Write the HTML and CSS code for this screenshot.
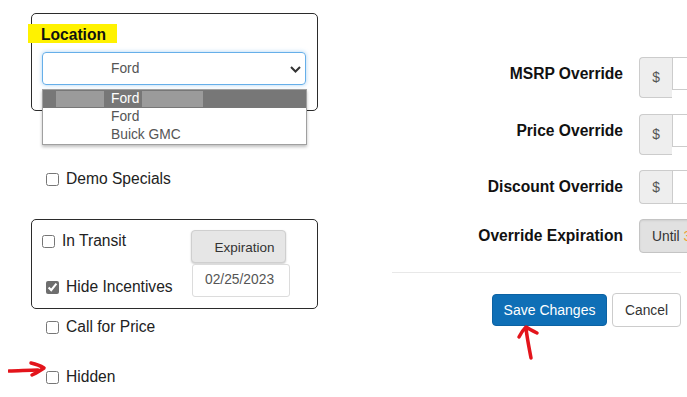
FILE: index.html
```html
<!DOCTYPE html>
<html>
<head>
    <title>Vehicle Options</title>
    <link rel="stylesheet" href="styles.css">
</head>
<body>

<div class="page">
    <div class="left">
        <div class="panel location-panel">
            <span class="highlight">Location</span>
            <div class="select-wrap">
                <div class="fake-select">
                    <span>Ford</span>
                    <svg class="chevron" width="11" height="7" viewBox="0 0 11 7"><path d="M1 1 L5.5 5.5 L10 1" fill="none" stroke="#333" stroke-width="2"/></svg>
                </div>
                <ul class="dropdown">
                    <li class="active"><i class="redact r1"></i>Ford<i class="redact r2"></i></li>
                    <li>Ford</li>
                    <li>Buick GMC</li>
                </ul>
            </div>
        </div>

        <label class="check demo"><input type="checkbox"> Demo Specials</label>

        <div class="panel transit-panel">
            <div class="transit-left">
                <label class="check flush"><input type="checkbox"> In Transit</label>
                <label class="check hide-inc"><input type="checkbox" checked> Hide Incentives</label>
            </div>
            <div class="transit-right">
                <button class="btn-exp">Expiration</button>
                <input class="date" type="text" value="02/25/2023">
            </div>
        </div>

        <label class="check call"><input type="checkbox"> Call for Price</label>
        <label class="check hidden-row"><input type="checkbox"> Hidden</label>

        <svg class="arrow arrow-left" width="40" height="20" viewBox="0 0 40 20">
            <path d="M1 11 C10 11, 20 10, 30 10" fill="none" stroke="#e3141b" stroke-width="3.5" stroke-linecap="round"/>
            <path d="M23 3 C28 4, 33 6, 36 8 C32 11, 28 13, 24 15" fill="none" stroke="#e3141b" stroke-width="3.5" stroke-linecap="round" stroke-linejoin="round"/>
        </svg>
    </div>

    <div class="right">
        <div class="row tall">
            <div class="label">MSRP Override</div>
            <div class="group"><span class="addon">$</span><input class="money" type="text"></div>
        </div>
        <div class="row tall">
            <div class="label">Price Override</div>
            <div class="group"><span class="addon">$</span><input class="money" type="text"></div>
        </div>
        <div class="row">
            <div class="label">Discount Override</div>
            <div class="group"><span class="addon">$</span><input class="money" type="text"></div>
        </div>
        <div class="row">
            <div class="label">Override Expiration</div>
            <button class="btn-until">Until <span class="orange">3/</span></button>
        </div>

        <div class="footer">
            <button class="btn-save">Save Changes</button>
            <button class="btn-cancel">Cancel</button>
        </div>

        <svg class="arrow arrow-up" width="30" height="40" viewBox="0 0 30 40">
            <path d="M10 5 C11 15, 13 24, 15 35" fill="none" stroke="#e3141b" stroke-width="3.5" stroke-linecap="round"/>
            <path d="M3 14 C5 10, 7 7, 10 4 C13 6, 17 8, 21 10" fill="none" stroke="#e3141b" stroke-width="3.5" stroke-linecap="round" stroke-linejoin="round"/>
        </svg>
    </div>
</div>

</body>
</html>
```

FILE: styles.css
```css
html, body {
    overflow: hidden;
}
body {
    margin: 0;
    background: #fff;
    font-family: "Liberation Sans", Arial, sans-serif;
    color: #222;
}
.page {
    display: flex;
    width: 800px;
}

/* left column */
.left {
    position: relative;
    width: 287px;
    padding: 13px 0 0 31px;
    display: flex;
    flex-direction: column;
}
.panel {
    border: 1px solid #2b2b2b;
    border-radius: 5px;
}
.location-panel {
    padding: 10px 10px 25px 10px;
}
.highlight {
    display: inline-block;
    margin-left: -14px;
    padding: 2px 11px 0 13px;
    height: 17px;
    line-height: 17px;
    background: #fff200;
    font-weight: bold;
    font-size: 15.6px;
    color: #111;
}
.select-wrap {
    position: relative;
    margin-top: 8px;
}
.fake-select {
    height: 31px;
    width: 194px;
    box-sizing: content-box;
    border: 1px solid #66afe9;
    border-radius: 4px;
    box-shadow: 0 0 4px rgba(102, 175, 233, 0.55);
    display: flex;
    align-items: center;
    padding-left: 68px;
    position: relative;
    font-size: 13.8px;
    color: #555;
}
.chevron {
    position: absolute;
    right: 4px;
    top: 13px;
}
.dropdown {
    position: absolute;
    top: 37px;
    left: 0;
    width: 263px;
    margin: 0;
    padding: 0;
    list-style: none;
    background: #fff;
    border: 1px solid #a0a0a0;
    box-shadow: 0 2px 3px rgba(0, 0, 0, 0.25);
    font-size: 13.8px;
    color: #555;
}
.dropdown li {
    position: relative;
    height: 18px;
    line-height: 18px;
    padding-left: 68px;
}
.dropdown li.active {
    background: #777;
    color: #fff;
}
.redact {
    position: absolute;
    top: 1px;
    height: 16px;
    background: #9b9b9b;
}
.r1 { left: 13px; width: 48px; }
.r2 { left: 99px; width: 61px; }

.check {
    display: flex;
    align-items: center;
    gap: 7px;
    height: 20px;
    font-size: 15.6px;
    color: #222;
    padding-left: 15px;
}
.check input {
    margin: 0;
    width: 13px;
    height: 13px;
    accent-color: #6e6e6e;
}
.demo {
    margin-top: 58px;
}
.transit-panel {
    margin-top: 30px;
    display: flex;
    padding: 10px;
}
.transit-left {
    width: 149px;
}
.transit-left .check {
    height: 22px;
}
.check.flush {
    padding-left: 0;
}
.check.hide-inc {
    padding-left: 4px;
    margin-top: 24px;
}
.transit-right {
    display: flex;
    flex-direction: column;
}
.btn-exp {
    width: 95px;
    height: 33px;
    padding: 2px 0 0 12px;
    background: #e6e6e6;
    border: 1px solid #cfcfcf;
    border-radius: 4px;
    box-shadow: 0 1px 2px rgba(0, 0, 0, 0.2);
    font-family: inherit;
    font-size: 13.5px;
    color: #333;
}
.date {
    margin: 1px 0 0 1px;
    width: 98px;
    height: 33px;
    box-sizing: border-box;
    border: 1px solid #dcdcdc;
    border-radius: 3px;
    padding: 0 0 2px 12px;
    font-family: inherit;
    font-size: 13.8px;
    color: #555;
}
.call {
    margin-top: 8px;
}
.hidden-row {
    margin-top: 30px;
}
.arrow {
    position: absolute;
}
.arrow-left {
    left: 8px;
    top: 360px;
}

/* right column */
.right {
    position: relative;
    margin-left: 74px;
    width: 408px;
    padding-top: 57px;
}
.row {
    display: flex;
    align-items: flex-start;
    gap: 16px;
    margin-bottom: 15px;
}
.row.tall:first-child {
    margin-bottom: 16px;
}
.label {
    width: 231px;
    text-align: right;
    font-weight: bold;
    font-size: 15.6px;
    line-height: 34px;
    color: #111;
}
.tall .label {
    line-height: 33px;
}
.group {
    display: flex;
    align-items: flex-start;
}
.addon {
    width: 32px;
    height: 32px;
    box-sizing: content-box;
    display: flex;
    align-items: center;
    justify-content: center;
    background: #eee;
    border: 1px solid #ccc;
    border-right: none;
    border-radius: 4px 0 0 4px;
    font-size: 13.8px;
    color: #555;
}
.tall .addon {
    height: 39px;
}
.money {
    width: 120px;
    height: 34px;
    box-sizing: border-box;
    margin: 0;
    border: 1px solid #ccc;
    border-radius: 0;
}
.tall .money {
    height: 33px;
}
.btn-until {
    height: 34px;
    width: 120px;
    text-align: left;
    padding: 0 0 0 12px;
    background: #e1e1e1;
    border: 1px solid #c4c4c4;
    border-radius: 4px;
    box-shadow: inset 0 1px 2px rgba(0, 0, 0, 0.08);
    font-family: inherit;
    font-size: 13.8px;
    color: #333;
}
.orange {
    color: #f0a030;
}
.footer {
    margin-top: 19px;
    border-top: 1px solid #e8e8e8;
    padding-top: 20px;
    width: 289px;
    display: flex;
    justify-content: flex-end;
    align-items: center;
    gap: 5px;
}
.btn-save {
    height: 32px;
    width: 115px;
    background: #0f6fb6;
    border: 1px solid #0c62a3;
    border-radius: 4px;
    color: #fff;
    font-family: inherit;
    font-size: 14px;
}
.btn-cancel {
    height: 34px;
    width: 69px;
    background: #fff;
    border: 1px solid #ccc;
    border-radius: 4px;
    color: #333;
    font-family: inherit;
    font-size: 13.8px;
}
.arrow-up {
    left: 124px;
    top: 323px;
}
```
